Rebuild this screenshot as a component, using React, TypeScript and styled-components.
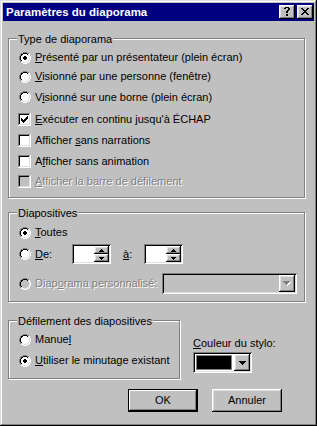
import React from "react";
import styled, { createGlobalStyle } from "styled-components";

const GlobalStyle = createGlobalStyle`
  html, body { margin: 0; padding: 0; background: #c0c0c0; }
  body { font-family: "Liberation Sans", Arial, sans-serif; font-size: 11px; }
`;

const RAISED =
  "inset -1px -1px #000, inset 1px 1px #fff, inset -2px -2px #808080, inset 2px 2px #dfdfdf";
const SUNKEN =
  "inset 1px 1px #808080, inset -1px -1px #fff, inset 2px 2px #000, inset -2px -2px #dfdfdf";

type Px = [number, number, string];

const PixelArt = ({ w, h, px }: { w: number; h: number; px: Px[] }) => (
  <svg width={w} height={h} viewBox={`0 0 ${w} ${h}`} shapeRendering="crispEdges" style={{ display: "block" }}>
    {px.map(([x, y, c], i) => (
      <rect key={i} x={x} y={y} width={1} height={1} fill={c} />
    ))}
  </svg>
);

const fromRows = (rows: number[][], color: string, ox = 0, oy = 0): Px[] => {
  const out: Px[] = [];
  rows.forEach((xs, y) => xs.forEach((x) => out.push([x + ox, y + oy, color])));
  return out;
};

const range = (a: number, b: number) => {
  const r: number[] = [];
  for (let i = a; i <= b; i++) r.push(i);
  return r;
};

/* ---------- Radio ---------- */
const OUTER: number[][] = [
  range(4, 7), [2, 3, 8, 9], [1, 10], [1, 10], [0, 11], [0, 11], [0, 11], [0, 11], [1, 10], [1, 10], [2, 3, 8, 9], range(4, 7),
];
const INNER: number[][] = [
  [], range(4, 7), [2, 3, 8, 9], [2, 9], [1, 10], [1, 10], [1, 10], [1, 10], [2, 9], [2, 3, 8, 9], range(4, 7), [],
];
const FILL: number[][] = [
  [], [], range(4, 7), range(3, 8), range(2, 9), range(2, 9), range(2, 9), range(2, 9), range(3, 8), range(4, 7), [], [],
];
const DOT: number[][] = [[5, 6], range(4, 7), range(4, 7), [5, 6]];

const RadioIcon = ({ checked, disabled }: { checked?: boolean; disabled?: boolean }) => {
  const px: Px[] = [];
  OUTER.forEach((xs, y) => xs.forEach((x) => px.push([x, y, x + y <= 10 ? "#808080" : "#ffffff"])));
  INNER.forEach((xs, y) => xs.forEach((x) => px.push([x, y, x + y <= 10 ? "#000000" : "#dfdfdf"])));
  px.push(...fromRows(FILL, disabled ? "#c0c0c0" : "#ffffff"));
  if (checked) px.push(...fromRows(DOT, disabled ? "#808080" : "#000000", 0, 4));
  return <PixelArt w={12} h={12} px={px} />;
};

/* ---------- Checkbox ---------- */
const CHECK: number[][] = [[6], [5, 6], [0, 4, 5, 6], [0, 1, 3, 4, 5], [0, 1, 2, 3, 4], [1, 2, 3], [2]];

const CheckIcon = ({ checked, disabled }: { checked?: boolean; disabled?: boolean }) => {
  const px: Px[] = [];
  for (let i = 0; i <= 12; i++) {
    px.push([i, 12, "#ffffff"]);
    px.push([12, i, "#ffffff"]);
  }
  for (let i = 0; i <= 11; i++) {
    px.push([i, 0, "#808080"]);
    px.push([0, i, "#808080"]);
  }
  for (let i = 1; i <= 11; i++) {
    px.push([i, 11, "#dfdfdf"]);
    px.push([11, i, "#dfdfdf"]);
  }
  for (let i = 1; i <= 10; i++) {
    px.push([i, 1, "#000000"]);
    px.push([1, i, "#000000"]);
  }
  for (let y = 2; y <= 10; y++) for (let x = 2; x <= 10; x++) px.push([x, y, disabled ? "#c0c0c0" : "#ffffff"]);
  if (checked) px.push(...fromRows(CHECK, "#000000", 3, 3));
  return <PixelArt w={13} h={13} px={px} />;
};

/* ---------- small glyphs ---------- */
const ArrowUp = () => <PixelArt w={5} h={3} px={fromRows([[2], [1, 2, 3], [0, 1, 2, 3, 4]], "#000")} />;
const ArrowDown = () => <PixelArt w={5} h={3} px={fromRows([[0, 1, 2, 3, 4], [1, 2, 3], [2]], "#000")} />;
const DROP: number[][] = [range(0, 6), range(1, 5), range(2, 4), [3]];
const DropArrow = ({ disabled }: { disabled?: boolean }) =>
  disabled ? (
    <PixelArt w={8} h={5} px={[...fromRows(DROP, "#ffffff", 1, 1), ...fromRows(DROP, "#808080")]} />
  ) : (
    <PixelArt w={7} h={4} px={fromRows(DROP, "#000")} />
  );
const CloseGlyph = () => (
  <PixelArt
    w={8}
    h={7}
    px={fromRows(
      [[0, 1, 6, 7], [1, 2, 5, 6], [2, 3, 4, 5], [3, 4], [2, 3, 4, 5], [1, 2, 5, 6], [0, 1, 6, 7]],
      "#000"
    )}
  />
);
const HelpGlyph = () => (
  <PixelArt
    w={6}
    h={9}
    px={fromRows(
      [[1, 2, 3, 4], [0, 1, 4, 5], [4, 5], [3, 4], [2, 3], [2, 3], [], [2, 3], [2, 3]],
      "#000"
    )}
  />
);

/* ---------- layout parts ---------- */
const Window = styled.div`
  width: 317px;
  height: 426px;
  box-sizing: border-box;
  padding: 3px;
  background: #c0c0c0;
  box-shadow: inset -1px -1px #000, inset 1px 1px #dfdfdf, inset -2px -2px #808080, inset 2px 2px #fff;
  display: flex;
  flex-direction: column;
  font-family: "Liberation Sans", Arial, sans-serif;
  font-size: 11px;
  color: #000;
`;

const TitleBar = styled.div`
  height: 18px;
  flex: none;
  background: #000080;
  display: flex;
  align-items: center;
  padding: 0 1px 0 2px;
`;

const Title = styled.div`
  flex: 1;
  color: #fff;
  font-weight: bold;
  font-size: 11.5px;
  line-height: 18px;
  white-space: nowrap;
  padding-left: 1px;
`;

const CapButton = styled.div<{ $ml?: number }>`
  width: 16px;
  height: 14px;
  box-sizing: border-box;
  background: #c0c0c0;
  box-shadow: ${RAISED};
  display: flex;
  align-items: center;
  justify-content: center;
  margin-left: ${(p) => p.$ml ?? 0}px;
  padding: 0 1px 1px 0;
`;

const Body = styled.div`
  display: flex;
  flex-direction: column;
  padding-left: 5px;
`;

const Group = styled.div<{ $w: number; $h: number; $mt: number; $pt: number }>`
  position: relative;
  box-sizing: border-box;
  width: ${(p) => p.$w}px;
  height: ${(p) => p.$h}px;
  margin-top: ${(p) => p.$mt}px;
  padding: ${(p) => p.$pt}px 0 0 9px;
  border: 1px solid #808080;
  box-shadow: 1px 1px 0 #fff, inset 1px 1px 0 #fff;
  display: flex;
  flex-direction: column;
  flex: none;
`;

const Legend = styled.div`
  position: absolute;
  top: -6px;
  left: 8px;
  padding: 0 1px;
  background: #c0c0c0;
  line-height: 13px;
  white-space: nowrap;
`;

const Option = styled.div<{ $h: number; $mt?: number }>`
  display: flex;
  align-items: center;
  height: ${(p) => p.$h}px;
  margin-top: ${(p) => p.$mt ?? 0}px;
  flex: none;
`;

const ControlSlot = styled.div`
  width: 13px;
  flex: none;
  display: flex;
  justify-content: flex-end;
  margin-right: 4px;
`;

const Label = styled.span<{ $disabled?: boolean; $w?: number; $ml?: number }>`
  line-height: 13px;
  white-space: nowrap;
  color: ${(p) => (p.$disabled ? "#808080" : "#000")};
  text-shadow: ${(p) => (p.$disabled ? "1px 1px 0 #fff" : "none")};
  width: ${(p) => (p.$w ? `${p.$w}px` : "auto")};
  margin-left: ${(p) => p.$ml ?? 0}px;
  flex: none;
`;

const Key = styled.span`
  text-decoration: underline;
  text-underline-offset: 1px;
`;

const SpinBox = styled.div`
  display: flex;
  width: 39px;
  height: 20px;
  box-sizing: border-box;
  padding: 2px;
  background: #fff;
  box-shadow: ${SUNKEN};
  flex: none;
`;

const SpinField = styled.div`
  flex: 1;
  background: #fff;
`;

const SpinButtons = styled.div`
  width: 15px;
  display: flex;
  flex-direction: column;
`;

const SpinBtn = styled.div`
  flex: 1;
  background: #c0c0c0;
  box-shadow: ${RAISED};
  display: flex;
  align-items: center;
  justify-content: center;
`;

const Combo = styled.div<{ $w: number; $disabled?: boolean }>`
  display: flex;
  width: ${(p) => p.$w}px;
  height: 21px;
  box-sizing: border-box;
  padding: 2px;
  background: ${(p) => (p.$disabled ? "#c0c0c0" : "#fff")};
  box-shadow: ${SUNKEN};
  flex: none;
`;

const ComboValue = styled.div`
  flex: 1;
  display: flex;
  padding: 2px 3px 2px 2px;
`;

const Swatch = styled.div<{ $color: string }>`
  flex: 1;
  background: ${(p) => p.$color};
  box-shadow: 0 0 0 1px #808080;
`;

const ComboBtn = styled.div`
  width: 16px;
  flex: none;
  background: #c0c0c0;
  box-shadow: ${RAISED};
  display: flex;
  align-items: center;
  justify-content: center;
`;

const BottomArea = styled.div`
  display: flex;
  align-items: flex-start;
  margin-top: 18px;
`;

const ColorColumn = styled.div`
  display: flex;
  flex-direction: column;
  margin-left: 13px;
  margin-top: 17px;
  gap: 2px;
`;

const ButtonRow = styled.div`
  display: flex;
  margin-top: 10px;
  padding-left: 120px;
  gap: 14px;
`;

const PushButton = styled.div<{ $default?: boolean }>`
  width: 70px;
  height: 23px;
  box-sizing: border-box;
  background: #c0c0c0;
  box-shadow: ${(p) =>
    p.$default
      ? "inset 0 0 0 1px #000, inset -2px -2px #000, inset 2px 2px #fff, inset -3px -3px #808080"
      : RAISED};
  display: flex;
  align-items: center;
  justify-content: center;
  line-height: 13px;
`;

/* ---------- composed controls ---------- */
const RadioOption = ({
  h, mt, checked, disabled, children,
}: { h: number; mt?: number; checked?: boolean; disabled?: boolean; children: React.ReactNode }) => (
  <Option $h={h} $mt={mt}>
    <ControlSlot><RadioIcon checked={checked} disabled={disabled} /></ControlSlot>
    <Label $disabled={disabled}>{children}</Label>
  </Option>
);

const CheckOption = ({
  h, checked, disabled, children,
}: { h: number; checked?: boolean; disabled?: boolean; children: React.ReactNode }) => (
  <Option $h={h}>
    <ControlSlot><CheckIcon checked={checked} disabled={disabled} /></ControlSlot>
    <Label $disabled={disabled}>{children}</Label>
  </Option>
);

const Spinner = () => (
  <SpinBox>
    <SpinField />
    <SpinButtons>
      <SpinBtn><ArrowUp /></SpinBtn>
      <SpinBtn><ArrowDown /></SpinBtn>
    </SpinButtons>
  </SpinBox>
);

export default function App() {
  return (
    <>
      <GlobalStyle />
      <Window>
        <TitleBar>
          <Title>Paramètres du diaporama</Title>
          <CapButton><HelpGlyph /></CapButton>
          <CapButton $ml={2}><CloseGlyph /></CapButton>
        </TitleBar>
        <Body>
          <Group $w={297} $h={160} $mt={17} $pt={9}>
            <Legend>Type de diaporama</Legend>
            <RadioOption h={19} checked><Key>P</Key>résenté par un présentateur (plein écran)</RadioOption>
            <RadioOption h={19}><Key>V</Key>isionné par une personne (fenêtre)</RadioOption>
            <RadioOption h={22}>V<Key>i</Key>sionné sur une borne (plein écran)</RadioOption>
            <CheckOption h={22} checked><Key>E</Key>xécuter en continu jusqu'à ÉCHAP</CheckOption>
            <CheckOption h={21}>Afficher <Key>s</Key>ans narrations</CheckOption>
            <CheckOption h={20}>A<Key>f</Key>ficher sans animation</CheckOption>
            <CheckOption h={20} disabled><Key>A</Key>fficher la barre de défilement</CheckOption>
          </Group>

          <Group $w={297} $h={90} $mt={14} $pt={9}>
            <Legend>Diapositives</Legend>
            <RadioOption h={21} checked><Key>T</Key>outes</RadioOption>
            <Option $h={22}>
              <ControlSlot><RadioIcon /></ControlSlot>
              <Label $w={37}><Key>D</Key>e:</Label>
              <Spinner />
              <Label $w={21} $ml={12}><Key>à</Key>:</Label>
              <Spinner />
            </Option>
            <Option $h={21} $mt={8}>
              <ControlSlot><RadioIcon disabled /></ControlSlot>
              <Label $disabled $w={127}>Diap<Key>o</Key>rama personnalisé:</Label>
              <Combo $w={135} $disabled>
                <ComboValue />
                <ComboBtn><DropArrow disabled /></ComboBtn>
              </Combo>
            </Option>
          </Group>

          <BottomArea>
            <Group $w={172} $h={59} $mt={0} $pt={8}>
              <Legend>Défilement des diapositives</Legend>
              <RadioOption h={21}>Manue<Key>l</Key></RadioOption>
              <RadioOption h={21} checked><Key>U</Key>tiliser le minutage existant</RadioOption>
            </Group>
            <ColorColumn>
              <Label><Key>C</Key>ouleur du stylo:</Label>
              <Combo $w={59}>
                <ComboValue><Swatch $color="#000" /></ComboValue>
                <ComboBtn><DropArrow /></ComboBtn>
              </Combo>
            </ColorColumn>
          </BottomArea>

          <ButtonRow>
            <PushButton $default>OK</PushButton>
            <PushButton>Annuler</PushButton>
          </ButtonRow>
        </Body>
      </Window>
    </>
  );
}
